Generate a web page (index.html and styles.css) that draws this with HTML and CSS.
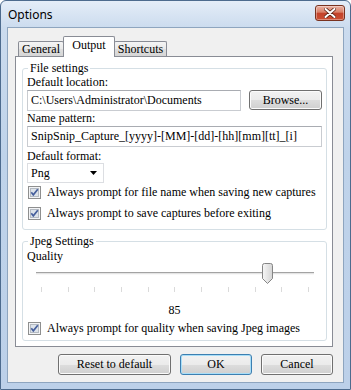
FILE: index.html
```html
<!DOCTYPE html>
<html lang="en">
<head>
    <meta charset="UTF-8">
    <title>Options</title>
    <link rel="stylesheet" href="styles.css">
</head>
<body>
    <div class="window">
        <div class="titlebar">
            <span class="title">Options</span>
            <div class="close">
                <svg width="12" height="10" viewBox="0 0 12 10">
                    <path d="M1.5 1 L10.5 9 M10.5 1 L1.5 9" stroke="#5b2316" stroke-width="3.6" stroke-linecap="round"/>
                    <path d="M1.5 1 L10.5 9 M10.5 1 L1.5 9" stroke="#ffffff" stroke-width="2" stroke-linecap="round"/>
                </svg>
            </div>
        </div>

        <div class="client">
            <div class="tabs">
                <div class="tab">General</div>
                <div class="tab active">Output</div>
                <div class="tab">Shortcuts</div>
            </div>

            <div class="panel">
                <fieldset class="group">
                    <legend>File settings</legend>
                    <div class="label">Default location:</div>
                    <div class="row">
                        <div class="textbox short">C:\Users\Administrator\Documents</div>
                        <div class="btn browse">Browse...</div>
                    </div>
                    <div class="label">Name pattern:</div>
                    <div class="textbox wide">SnipSnip_Capture_[yyyy]-[MM]-[dd]-[hh][mm][tt]_[i]</div>
                    <div class="label format">Default format:</div>
                    <div class="combo">
                        <span>Png</span>
                        <svg width="7" height="4" viewBox="0 0 7 4"><path d="M0 0 H7 L3.5 4 Z" fill="#000"/></svg>
                    </div>
                    <div class="check first">
                        <svg class="box" width="13" height="13" viewBox="0 0 13 13">
                            <rect x="0.5" y="0.5" width="12" height="12" fill="#f3f4f6" stroke="#8e8f8f"/>
                            <rect x="2.5" y="2.5" width="8" height="8" fill="#dde3ea" stroke="#b4bac2"/>
                            <path d="M3.3 6.3 L5.3 8.8 L9.8 3.2" fill="none" stroke="#465f9c" stroke-width="1.7"/>
                        </svg>
                        <span>Always prompt for file name when saving new captures</span>
                    </div>
                    <div class="check second">
                        <svg class="box" width="13" height="13" viewBox="0 0 13 13">
                            <rect x="0.5" y="0.5" width="12" height="12" fill="#f3f4f6" stroke="#8e8f8f"/>
                            <rect x="2.5" y="2.5" width="8" height="8" fill="#dde3ea" stroke="#b4bac2"/>
                            <path d="M3.3 6.3 L5.3 8.8 L9.8 3.2" fill="none" stroke="#465f9c" stroke-width="1.7"/>
                        </svg>
                        <span>Always prompt to save captures before exiting</span>
                    </div>
                </fieldset>

                <fieldset class="group jpeg">
                    <legend>Jpeg Settings</legend>
                    <div class="label quality">Quality</div>
                    <div class="slider">
                        <div class="track"></div>
                        <div class="ticks">
                            <i></i><i></i><i></i><i></i><i></i><i></i><i></i><i></i><i></i><i></i><i></i>
                        </div>
                        <svg class="thumb" width="11" height="21" viewBox="0 0 11 21">
                            <defs>
                                <linearGradient id="thumbFill" x1="0" y1="0" x2="1" y2="0">
                                    <stop offset="0" stop-color="#f7f7f7"/>
                                    <stop offset="1" stop-color="#d4d4d4"/>
                                </linearGradient>
                            </defs>
                            <path d="M0.5 2.5 Q0.5 0.5 2.5 0.5 H8.5 Q10.5 0.5 10.5 2.5 V15.5 L5.5 20.5 L0.5 15.5 Z" fill="url(#thumbFill)" stroke="#858585"/>
                        </svg>
                    </div>
                    <div class="value">85</div>
                    <div class="check third">
                        <svg class="box" width="13" height="13" viewBox="0 0 13 13">
                            <rect x="0.5" y="0.5" width="12" height="12" fill="#f3f4f6" stroke="#8e8f8f"/>
                            <rect x="2.5" y="2.5" width="8" height="8" fill="#dde3ea" stroke="#b4bac2"/>
                            <path d="M3.3 6.3 L5.3 8.8 L9.8 3.2" fill="none" stroke="#465f9c" stroke-width="1.7"/>
                        </svg>
                        <span>Always prompt for quality when saving Jpeg images</span>
                    </div>
                </fieldset>
            </div>

            <div class="buttons">
                <div class="btn reset">Reset to default</div>
                <div class="btn ok">OK</div>
                <div class="btn cancel">Cancel</div>
            </div>
        </div>
    </div>
</body>
</html>
```

FILE: styles.css
```css
* {
    margin: 0;
    padding: 0;
    box-sizing: border-box;
}

body {
    width: 351px;
    height: 390px;
    overflow: hidden;
    background: #ffffff;
    font-family: 'Liberation Serif', 'DejaVu Serif', serif;
    font-size: 12px;
    line-height: 14px;
    color: #000;
}

.window {
    width: 351px;
    height: 390px;
    border: 1px solid #4d6b8e;
    border-radius: 6px 6px 0 0;
    padding: 0 6px 6px;
    background: linear-gradient(180deg, #e4edf8 0%, #cbdbee 7%, #bfd3ea 40%, #bcd0e9 100%);
}

.titlebar {
    height: 26px;
    display: flex;
    justify-content: space-between;
    align-items: flex-start;
}

.title {
    font-family: 'Noto Sans', 'DejaVu Sans', sans-serif;
    font-size: 12px;
    line-height: 16px;
    padding: 6px 0 0 1px;
    color: #000;
}

.close {
    width: 30px;
    height: 16px;
    margin: 4px -1px 0 0;
    border: 1px solid #79321f;
    border-radius: 3px;
    background: linear-gradient(180deg, #eab1a2 0%, #d98068 45%, #c3422a 50%, #cc4f33 100%);
    box-shadow: inset 0 0 0 1px rgba(255, 255, 255, 0.35);
    display: flex;
    align-items: center;
    justify-content: center;
}

.client {
    height: 356px;
    border: 1px solid #8ea5bf;
    background: #f0f0f0;
    padding: 0 10px 7px 7px;
}

.tabs {
    height: 28px;
    display: flex;
    align-items: flex-end;
    padding-left: 3px;
}

.tab {
    height: 15px;
    border: 1px solid #898c95;
    border-bottom: none;
    border-radius: 2px 2px 0 0;
    background: linear-gradient(180deg, #f4f4f4 0%, #e9e9e9 50%, #dedede 51%, #d6d6d6 100%);
    text-align: center;
    line-height: 15px;
    width: 46px;
}

.tab + .tab {
    margin-left: -1px;
}

.tab.active {
    position: relative;
    z-index: 1;
    width: 52px;
    height: 21px;
    margin-bottom: -1px;
    background: #ffffff;
    line-height: 16px;
}

.tab:last-child {
    width: 53px;
}

.panel {
    height: 291px;
    border: 1px solid #898c95;
    background: #ffffff;
    padding: 4px 5px 0 6px;
}

.group {
    border: 1px solid #d5dfe5;
    border-radius: 3px;
    padding: 0 4px 9px 4px;
}

.group legend {
    padding: 0 2px;
    margin-left: 1px;
    line-height: 14px;
}

.group.jpeg {
    margin-top: 4px;
    padding-bottom: 5px;
}

.label {
    height: 14px;
}

.label.format {
    margin-top: 2px;
}

.label.quality {
    margin-top: 1px;
}

.row {
    display: flex;
    gap: 8px;
    margin-top: 1px;
}

.textbox {
    height: 21px;
    border: 1px solid #c9ccd1;
    border-top-color: #a9acb2;
    background: #fff;
    padding: 0 3px;
    line-height: 19px;
    white-space: nowrap;
    overflow: hidden;
}

.textbox.short {
    width: 214px;
}

.textbox.wide {
    width: 295px;
    margin-top: 1px;
}

.btn {
    height: 21px;
    border: 1px solid #707070;
    border-radius: 3px;
    background: linear-gradient(180deg, #f2f2f2 0%, #ebebeb 50%, #dddddd 51%, #cfcfcf 100%);
    box-shadow: inset 0 0 0 1px #fbfbfb;
    text-align: center;
    line-height: 19px;
}

.btn.browse {
    width: 73px;
    height: 20px;
    line-height: 18px;
}

.combo {
    width: 77px;
    height: 20px;
    border: 1px solid #dcdee2;
    background: #fff;
    display: flex;
    align-items: center;
    justify-content: space-between;
    padding: 0 6px 0 3px;
}

.check {
    display: flex;
    align-items: center;
    gap: 6px;
    height: 14px;
    padding-left: 1px;
}

.check.first {
    margin-top: 2px;
}

.check.second {
    margin-top: 7px;
}

.check.third {
    margin-top: 4px;
}

.slider {
    position: relative;
    height: 30px;
    padding-top: 9px;
}

.track {
    height: 3px;
    margin: 0 8px 0 9px;
    background: #e4e4e4;
    border-top: 1px solid #a3a3a3;
    border-bottom: 1px solid #f8f8f8;
}

.ticks {
    display: flex;
    justify-content: space-between;
    height: 5px;
    margin: 12px 13px 0 14px;
}

.ticks i {
    width: 1px;
    height: 5px;
    background: #dadada;
}

.thumb {
    position: absolute;
    top: 0;
    left: 235px;
}

.value {
    margin-top: 10px;
    height: 14px;
    text-align: center;
}

.buttons {
    display: flex;
    justify-content: flex-end;
    gap: 9px;
    margin-top: 7px;
}

.btn.reset {
    width: 113px;
}

.btn.ok {
    width: 72px;
    border-color: #3c7fb1;
    box-shadow: inset 0 0 0 1px #a8def8;
}

.btn.cancel {
    width: 72px;
}
```
